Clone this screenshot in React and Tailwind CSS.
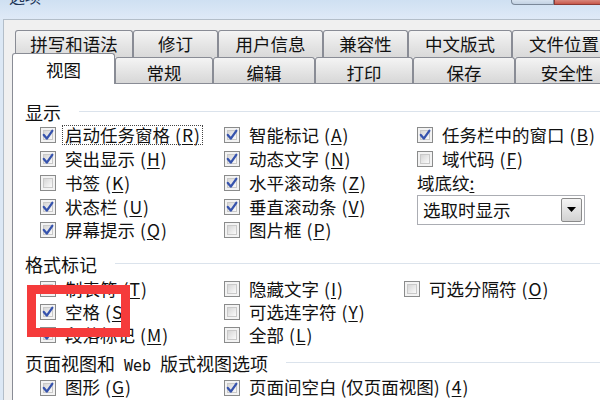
import React from "react";

const Check = ({ checked }) => (
  <div className="relative w-4 h-4 shrink-0 border border-[#8a8b8b] bg-[#f3f3f3]">
    <div className="absolute inset-[2px] border border-[#c9c9c9] bg-linear-to-br from-[#d6d6d6] to-[#fafafa]" />
    {checked && (
      <svg className="absolute inset-0" width="14" height="14" viewBox="0 0 14 14">
        <path d="M2.8 7 L5.8 10.6 L11.3 2.8" fill="none" stroke="#3653ad" strokeWidth="2.3" strokeLinecap="round" strokeLinejoin="round" />
      </svg>
    )}
  </div>
);

const Key = ({ k }) => (
  <span className="ml-[5px]">
    (<span className="underline underline-offset-2 px-[1px]">{k}</span>)
  </span>
);

const Row = ({ checked, t, k, h, focus }) => (
  <div className={`flex items-center ${h}`}>
    <Check checked={checked} />
    {focus ? (
      <span className="ml-[6px] px-[2px] border border-dotted border-[#444] leading-[18px]">
        {t}
        <Key k={k} />
      </span>
    ) : (
      <span className="ml-[9px] whitespace-nowrap">
        {t}
        <Key k={k} />
      </span>
    )}
  </div>
);

const Header = ({ children, cls }) => (
  <div className={`h-[20px] flex items-center text-[18px] whitespace-nowrap ${cls}`}>
    <span>{children}</span>
    <div className="flex-1 h-px bg-[#dbe3ec] ml-[18px] -mt-[2px]" />
  </div>
);

const tabBase =
  "shrink-0 border-t border-l border-r border-[#898c95] rounded-t-[3px] text-center whitespace-nowrap";

export default function App() {
  const R1 = "h-[23.75px]";
  const R2 = "h-[23.25px]";
  return (
    <div className="relative w-[600px] h-[400px] overflow-hidden bg-[#dce8f5] flex flex-col text-[#111] font-['Noto_Sans_CJK_SC','Noto_Sans',sans-serif] text-[17.5px]">
      {/* title bar */}
      <div className="h-[19px] shrink-0 flex items-start overflow-hidden bg-linear-to-b from-[#cfe0f2] to-[#dfeaf7]">
        <span className="ml-[9px] -mt-[12px] text-[16px] leading-none text-[#1d3557]">选项</span>
        <div className="ml-auto flex items-start">
          <div className="w-[43px] h-[5px] rounded-bl-[4px] border border-t-0 border-[#7a8899] bg-linear-to-b from-[#d6e2ef] to-[#c3d2e3]" />
          <div className="w-[46px] h-[5px] border-b border-l border-[#8d3b35] bg-linear-to-b from-[#d8867c] to-[#c7574a]" />
        </div>
      </div>

      {/* client */}
      <div className="flex-1 ml-[3px] border-l border-t border-[#b3bec9] bg-[#f0f0f0] pl-[8px] flex flex-col min-h-0">
        {/* tab row 1 */}
        <div className="mt-[10px] ml-[3px] flex h-[27px] shrink-0">
          {[
            ["w-[118px]", "拼写和语法"],
            ["w-[85px]", "修订"],
            ["w-[105px]", "用户信息"],
            ["w-[85px]", "兼容性"],
            ["w-[104px]", "中文版式"],
            ["w-[104px]", "文件位置"],
          ].map(([w, t]) => (
            <div key={t} className={`${tabBase} ${w} h-[27px] leading-[26px] bg-linear-to-b from-[#f4f4f4] to-[#d9d9d9]`}>
              {t}
            </div>
          ))}
        </div>

        {/* tab row 2 */}
        <div className="relative -mt-[4px] h-[30px] flex items-start shrink-0">
          <div className={`${tabBase} relative z-10 w-[103px] h-[31px] bg-white leading-[30px] pt-[1px]`}>视图</div>
          {[
            ["w-[98px]", "常规"],
            ["w-[102px]", "编辑"],
            ["w-[98px]", "打印"],
            ["w-[102px]", "保存"],
            ["w-[104px]", "安全性"],
          ].map(([w, t]) => (
            <div key={t} className={`${tabBase} ${w} mt-[4px] h-[26px] leading-[26px] pt-[2px] bg-linear-to-b from-[#f4f4f4] to-[#d7d7d7]`}>
              {t}
            </div>
          ))}
        </div>

        {/* panel */}
        <div className="flex-1 bg-white border-t border-l border-[#898c95] pl-[12px] pt-[18px] flex flex-col">
          <Header>显示</Header>
          <div className="mt-[1.5px] ml-[15px] flex">
            <div className="w-[184px] flex flex-col">
              <Row h={R1} checked t="启动任务窗格" k="R" focus />
              <Row h={R1} checked t="突出显示" k="H" />
              <Row h={R1} t="书签" k="K" />
              <Row h={R1} checked t="状态栏" k="U" />
              <Row h={R1} checked t="屏幕提示" k="Q" />
            </div>
            <div className="w-[193px] flex flex-col">
              <Row h={R1} checked t="智能标记" k="A" />
              <Row h={R1} checked t="动态文字" k="N" />
              <Row h={R1} checked t="水平滚动条" k="Z" />
              <Row h={R1} checked t="垂直滚动条" k="V" />
              <Row h={R1} t="图片框" k="P" />
            </div>
            <div className="flex flex-col">
              <Row h={R1} checked t="任务栏中的窗口" k="B" />
              <Row h={R1} t="域代码" k="F" />
              <div className={`${R1} flex items-center whitespace-nowrap`}>
                域底纹<span className="underline underline-offset-2">:</span>
              </div>
              <div className="w-[168px] h-[30px] border border-[#abadb3] bg-white flex items-center pl-[5px]">
                <span className="flex-1 whitespace-nowrap">选取时显示</span>
                <div className="w-[21px] h-[24px] mr-[2px] border border-[#8a8a8a] rounded-[2px] bg-linear-to-b from-[#f5f5f5] to-[#d2d2d2] flex items-center justify-center">
                  <svg width="9" height="5" viewBox="0 0 9 5">
                    <path d="M0 0 H9 L4.5 5 Z" fill="#000" />
                  </svg>
                </div>
              </div>
            </div>
          </div>

          <Header cls="mt-[11.75px]">格式标记</Header>
          <div className="mt-[3.25px] ml-[15px] flex">
            <div className="w-[184px] flex flex-col">
              <Row h={R2} t="制表符" k="T" />
              <Row h={R2} checked t="空格" k="S" />
              <Row h={R2} checked t="段落标记" k="M" />
            </div>
            <div className="w-[180px] flex flex-col">
              <Row h={R2} t="隐藏文字" k="I" />
              <Row h={R2} t="可选连字符" k="Y" />
              <Row h={R2} t="全部" k="L" />
            </div>
            <div className="flex flex-col">
              <Row h={R2} t="可选分隔符" k="O" />
            </div>
          </div>

          <Header cls="mt-[6.5px]">
            页面视图和<span className="mx-[9px] font-['DejaVu_Sans_Mono',monospace] text-[15px]">Web</span>版式视图选项
          </Header>
          <div className="mt-[2.25px] ml-[15px] flex">
            <div className="w-[184px]">
              <Row h="h-[23.5px]" checked t="图形" k="G" />
            </div>
            <div>
              <Row h="h-[23.5px]" checked t="页面间空白 (仅页面视图)" k="4" />
            </div>
          </div>
        </div>
      </div>

      {/* red highlight box */}
      <div className="absolute left-[27px] top-[285px] w-[103px] h-[52px] border-[9px] border-[#f53b3b]" />
    </div>
  );
}
